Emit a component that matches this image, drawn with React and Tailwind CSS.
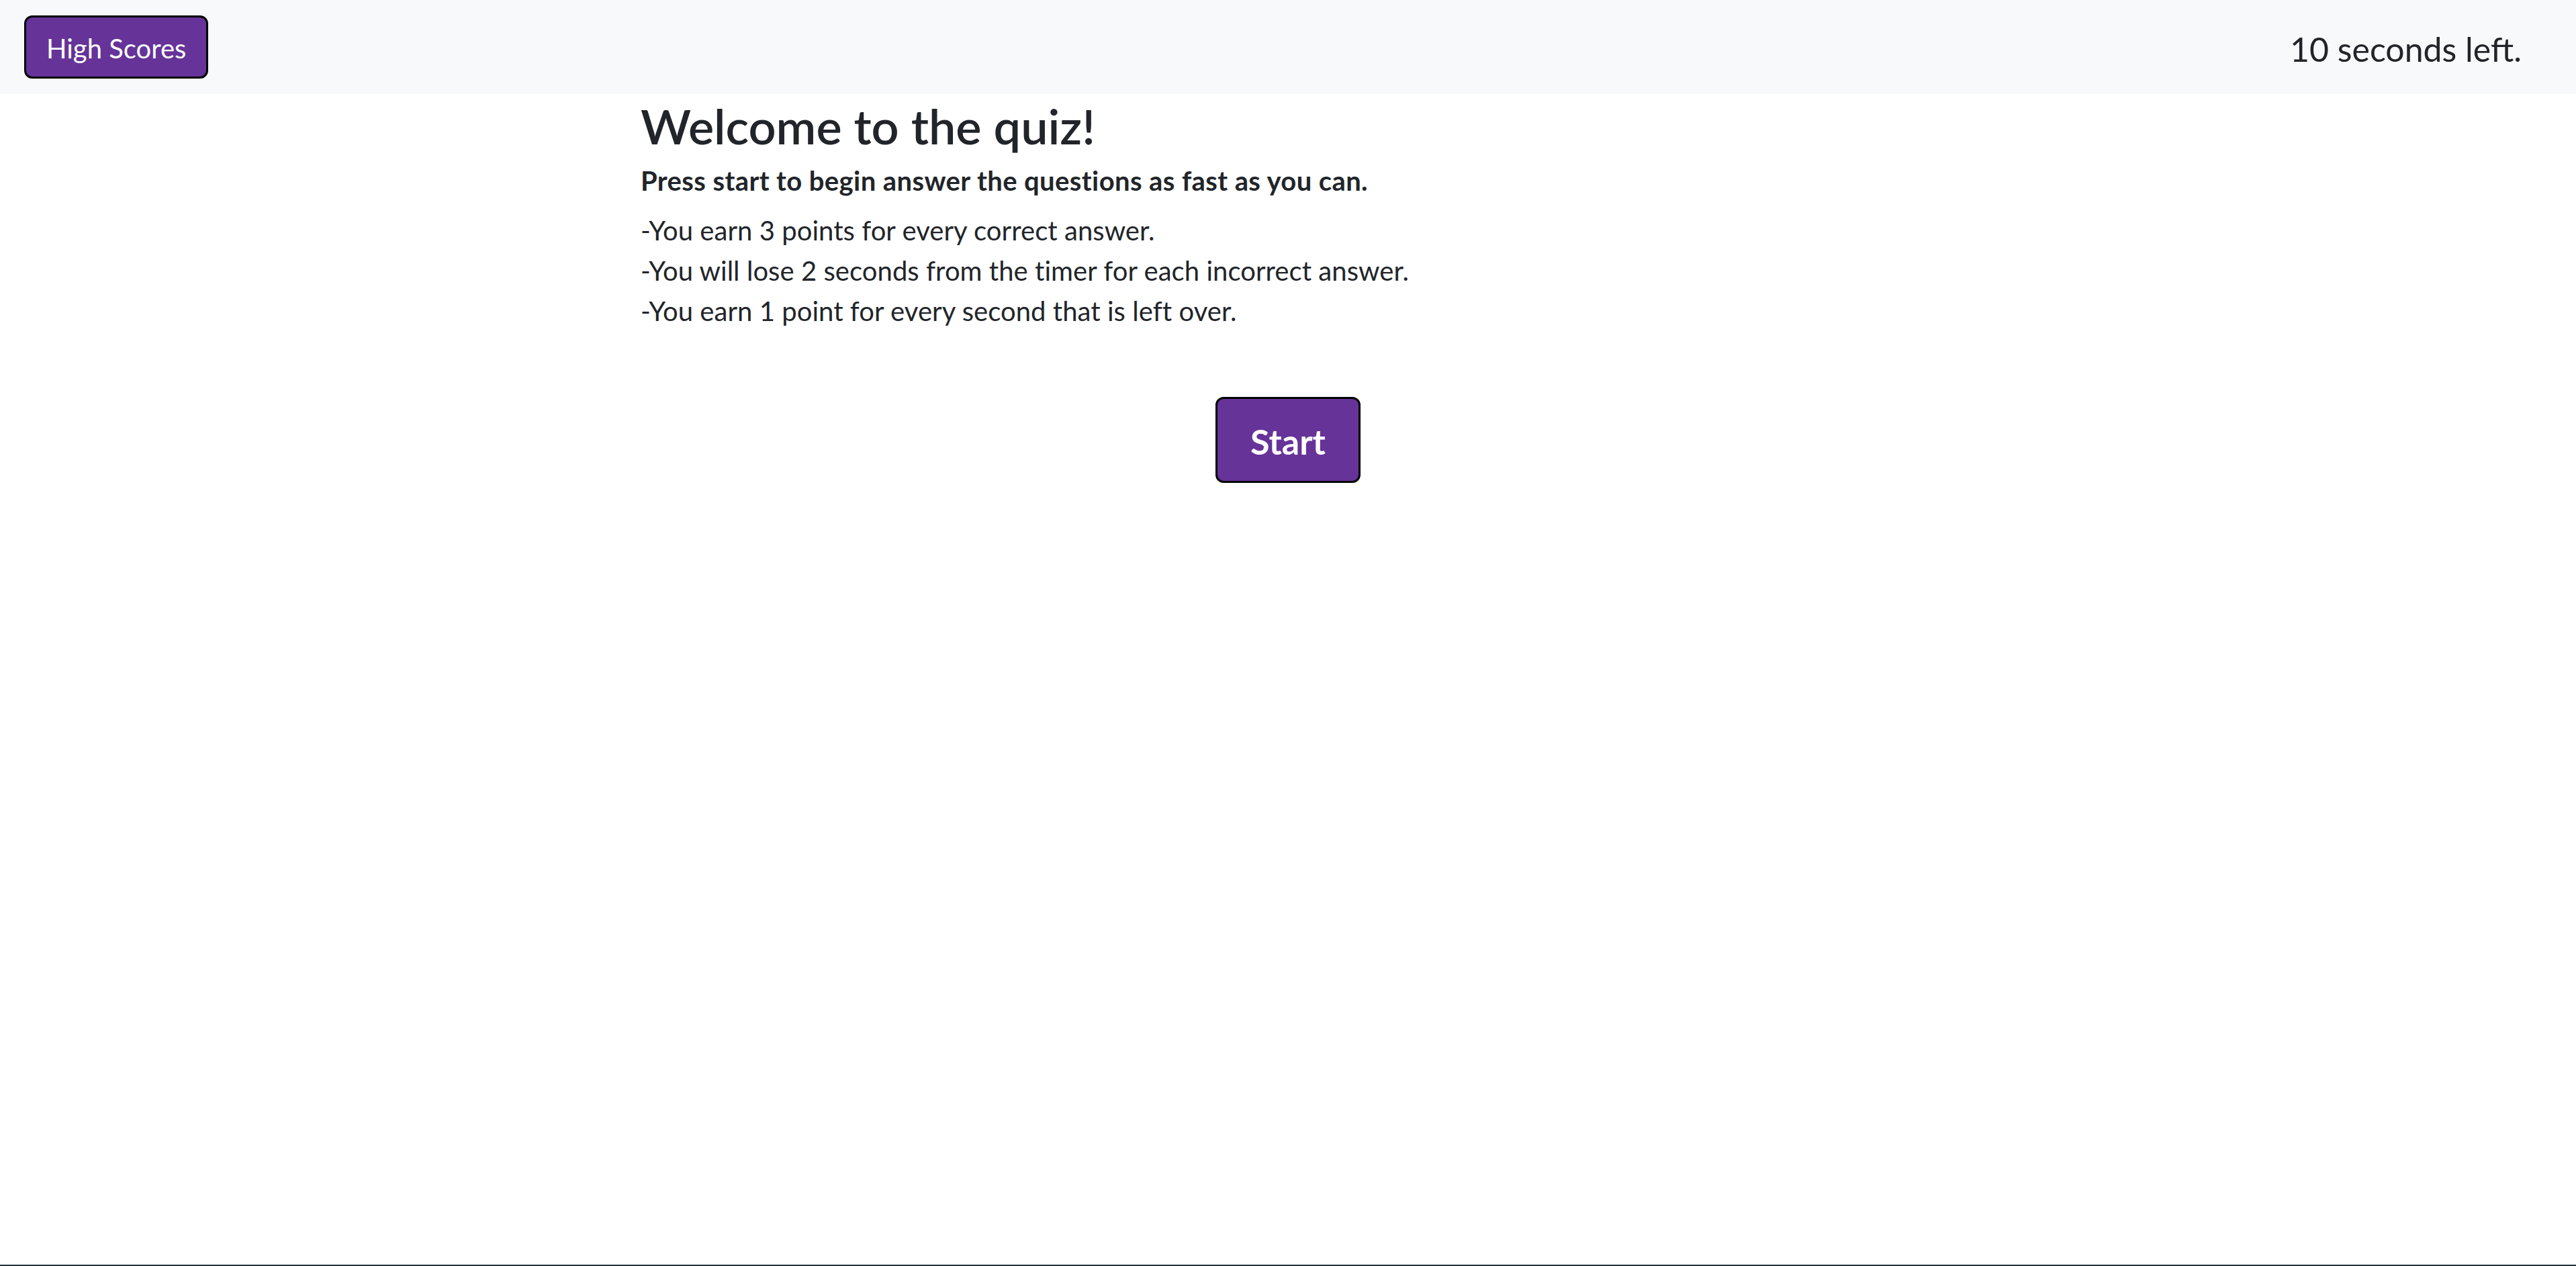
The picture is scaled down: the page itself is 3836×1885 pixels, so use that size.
import React from 'react';

const rules = [
    '-You earn 3 points for every correct answer.',
    '-You will lose 2 seconds from the timer for each incorrect answer.',
    '-You earn 1 point for every second that is left over.',
];

const App = () => {
    return (
        <div className="min-h-screen flex flex-col bg-white text-[#212529] font-['Lato','Open_Sans',sans-serif]">
            <nav className="h-[140px] shrink-0 bg-[#f8f9fa] flex items-center justify-between pl-[36px] pr-[81px]">
                <button className="h-[94px] px-[30px] pt-[3px] rounded-[12px] border-[3px] border-black bg-[#663399] text-white text-[40px] leading-none">
                    High Scores
                </button>
                <span className="text-[50px] leading-none mt-[5px]">10 seconds left.</span>
            </nav>

            <main className="flex-1 w-[1928px] mx-auto">
                <h2 className="text-[72px] font-semibold leading-[1.2] mt-[4px]">Welcome to the quiz!</h2>
                <p className="text-[40px] font-bold leading-[60px] mt-[9px] tracking-[0.4px]">
                    Press start to begin answer the questions as fast as you can.
                </p>
                <ul className="mt-[14px]">
                    {rules.map((r) => (
                        <li key={r} className="text-[40px] leading-[60px] tracking-[0.05px]">{r}</li>
                    ))}
                </ul>
                <div className="flex justify-center mt-[98px]">
                    <button className="h-[128px] w-[216px] pt-[3px] rounded-[12px] border-[3px] border-black bg-[#663399] text-white text-[52px] font-bold leading-none flex items-center justify-center">
                        Start
                    </button>
                </div>
            </main>

            <div className="h-[2px] shrink-0 bg-[#22303a]" />
        </div>
    );
};

export default App;
